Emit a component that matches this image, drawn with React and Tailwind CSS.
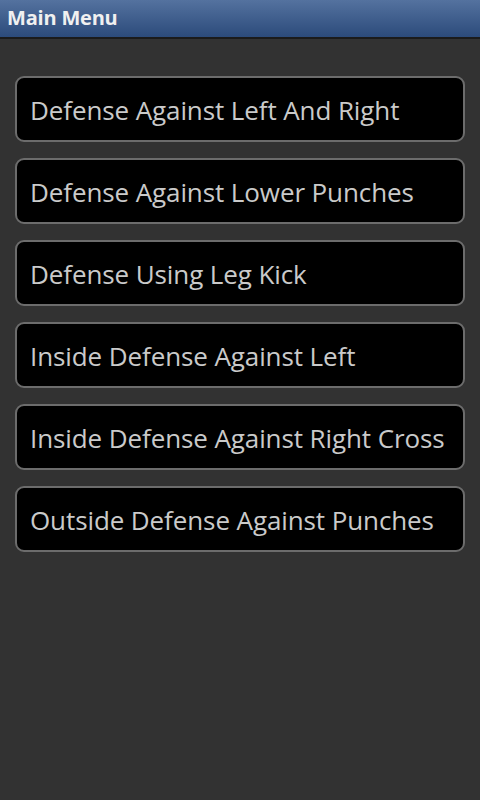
export default function App() {
  const items = [
    "Defense Against Left And Right",
    "Defense Against Lower Punches",
    "Defense Using Leg Kick",
    "Inside Defense Against Left",
    "Inside Defense Against Right Cross",
    "Outside Defense Against Punches",
  ];
  return (
    <div className="w-[480px] h-[800px] bg-[#323232] flex flex-col" style={{ fontFamily: '"Open Sans", "DejaVu Sans", sans-serif' }}>
      <div className="h-[39px] bg-gradient-to-b from-[#54729f] to-[#2c4b7b] flex items-center px-[7px] pb-[2px] border-b-2 border-[#1b1b1b]">
        <span className="text-[20px] font-bold text-[#f0f0f0] tracking-[-0.2px]">Main Menu</span>
      </div>
      <div className="flex flex-col gap-[16px] px-[15px] pt-[37px]">
        {items.map((t) => (
          <div key={t} className="h-[66px] bg-black border-2 border-[#6c6c6c] rounded-[9px] flex items-center px-[13px] pt-[2px]">
            <span className="text-[26px] text-[#cacaca] whitespace-nowrap tracking-[-0.1px]">{t}</span>
          </div>
        ))}
      </div>
    </div>
  );
}
